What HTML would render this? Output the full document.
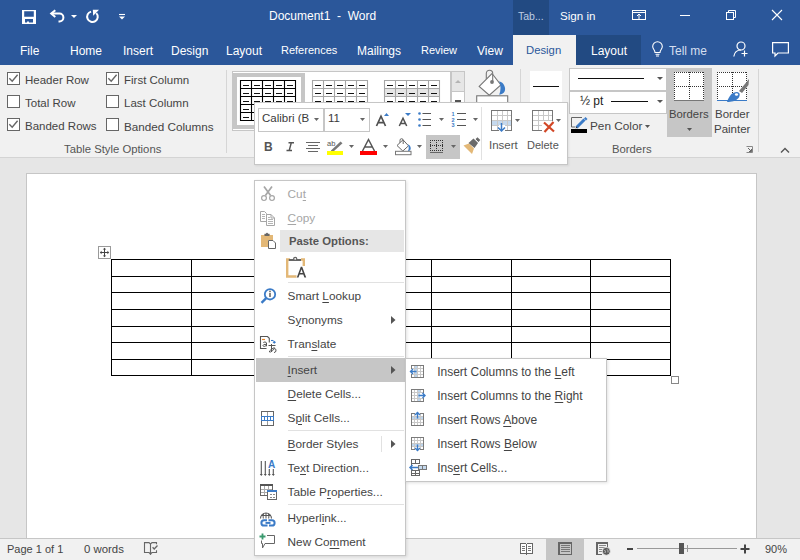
<!DOCTYPE html>
<html><head><meta charset="utf-8">
<style>
*{margin:0;padding:0;box-sizing:border-box}
html,body{width:800px;height:560px;overflow:hidden;background:#e6e6e6;font-family:"Liberation Sans",sans-serif;font-size:12px;color:#444;position:relative}
.a{position:absolute}
.t{position:absolute;white-space:nowrap;line-height:1}
svg{position:absolute;overflow:visible}
#title{left:0;top:0;width:800px;height:35px;background:#2b579a}
#tabs{left:0;top:35px;width:800px;height:30px;background:#2b579a}
#ribbon{left:0;top:65px;width:800px;height:93px;background:#f1f1f1;border-bottom:1px solid #d4d4d4}
#page{left:26px;top:173px;width:731px;height:380px;background:#fff;border:1px solid #c6c6c6}
#status{left:0;top:538px;width:800px;height:22px;background:#f1f1f1;border-top:1px solid #c6c6c6}
.w{color:#fff}
u{text-underline-offset:1.5px}
.cb{position:absolute;width:13px;height:13px;border:1px solid #666;background:#fff}
</style></head><body>
<!-- TITLE BAR -->
<div id="title" class="a"></div>
<div class="a" style="left:513px;top:0;width:36px;height:35px;background:#224a82"></div>
<!-- save -->
<svg style="left:22px;top:10px" width="14" height="14" viewBox="0 0 14 14"><path d="M0 0H14V14H0ZM2.2 1.3V6.7H11.8V1.3ZM3 9.1V12.4H5V11.4H7V12.4H11V9.1Z" fill="#fff" fill-rule="evenodd"/></svg>
<!-- undo -->
<svg style="left:49px;top:9px" width="17" height="15" viewBox="0 0 17 15"><path d="M6.3 1.2L2.2 4.6L6.3 8" fill="none" stroke="#fff" stroke-width="2"/><path d="M2.5 4.6H10.5A3.9 3.9 0 0 1 10.5 12.4H9.5" fill="none" stroke="#fff" stroke-width="2"/></svg>
<svg style="left:71px;top:15px" width="6" height="3" viewBox="0 0 6 3"><path d="M0 0H6L3 3Z" fill="#fff"/></svg>
<!-- redo -->
<svg style="left:85px;top:9px" width="16" height="16" viewBox="0 0 16 16"><path d="M6.1 2.6A5.3 5.3 0 1 0 11.3 4.1" fill="none" stroke="#fff" stroke-width="2"/><path d="M7.8 0.8H14L8.2 6.8Z" fill="#fff"/></svg>
<svg style="left:119px;top:14px" width="6" height="6" viewBox="0 0 6 6"><path d="M0 0.5H6" stroke="#fff" stroke-width="1.1"/><path d="M0 2.5H6L3 5.5Z" fill="#fff"/></svg>
<div class="t w" style="left:269px;top:10px;font-size:12px">Document1&nbsp; - &nbsp;Word</div>
<div class="t" style="left:518px;top:11px;font-size:10.5px;color:#bfcde3">Tab...</div>
<div class="t w" style="left:560px;top:10px;font-size:11.6px">Sign in</div>
<svg style="left:632px;top:10px" width="14" height="10" viewBox="0 0 14 10"><rect x="0.5" y="0.5" width="13" height="9" fill="none" stroke="#fff"/><path d="M0.5 2.5H13.5" stroke="#fff"/><path d="M7 9V4M5 6L7 4L9 6" fill="none" stroke="#fff" stroke-width="1"/></svg>
<div class="a" style="left:680px;top:15px;width:10px;height:1px;background:#fff"></div>
<svg style="left:726px;top:10px" width="10" height="10" viewBox="0 0 10 10"><rect x="0.5" y="2.5" width="7" height="7" fill="none" stroke="#fff"/><path d="M2.5 2.5V0.5H9.5V7.5H7.5" fill="none" stroke="#fff"/></svg>
<svg style="left:772px;top:10px" width="10" height="10" viewBox="0 0 10 10"><path d="M0 0L10 10M10 0L0 10" stroke="#fff" stroke-width="1.1"/></svg>

<!-- TABS -->
<div id="tabs" class="a"></div>
<div class="a" style="left:513px;top:35px;width:63px;height:30px;background:#f1f1f1"></div>
<div class="a" style="left:576px;top:35px;width:65px;height:30px;background:#224a82"></div>
<div class="t w" style="left:20px;top:45px">File</div>
<div class="t w" style="left:70px;top:45px">Home</div>
<div class="t w" style="left:123px;top:45px">Insert</div>
<div class="t w" style="left:171px;top:45px">Design</div>
<div class="t w" style="left:226px;top:45px">Layout</div>
<div class="t w" style="left:281px;top:45px;font-size:11px">References</div>
<div class="t w" style="left:357px;top:45px">Mailings</div>
<div class="t w" style="left:421px;top:45px;font-size:11px">Review</div>
<div class="t w" style="left:477px;top:45px">View</div>
<div class="t" style="left:526px;top:45px;color:#2b579a;font-size:11.3px">Design</div>
<div class="t w" style="left:591px;top:45px">Layout</div>
<svg style="left:652px;top:42px" width="11" height="15" viewBox="0 0 11 15"><path d="M3 10.5C3 8 0.7 7 0.7 4.6A4.8 4.8 0 0 1 10.3 4.6C10.3 7 8 8 8 10.5Z" fill="none" stroke="#fff" stroke-width="1.1"/><path d="M3.5 12.3H7.5M4 14H7" stroke="#fff" stroke-width="1"/></svg>
<div class="t" style="left:669px;top:45px;color:#d5dff0;font-size:12px">Tell me</div>
<svg style="left:733px;top:41px" width="16" height="16" viewBox="0 0 16 16"><circle cx="8" cy="5" r="4" fill="none" stroke="#fff" stroke-width="1.2"/><path d="M0.8 15.5C1.5 11 4 9 8 9" fill="none" stroke="#fff" stroke-width="1.2"/><path d="M11.5 9.5V15.5M8.5 12.5H14.5" stroke="#fff" stroke-width="1.2"/></svg>
<svg style="left:772px;top:42px" width="17" height="15" viewBox="0 0 17 15"><path d="M0.6 0.6H16.4V11H6L3 14V11H0.6Z" fill="none" stroke="#fff" stroke-width="1.2"/></svg>

<!-- RIBBON -->
<div id="ribbon" class="a"></div>
<div class="cb" style="left:7px;top:72px"></div>
<div class="cb" style="left:7px;top:95px"></div>
<div class="cb" style="left:7px;top:118px"></div>
<div class="cb" style="left:106px;top:72px"></div>
<div class="cb" style="left:106px;top:95px"></div>
<div class="cb" style="left:106px;top:118px"></div>
<svg style="left:7px;top:72px" width="13" height="13" viewBox="0 0 13 13"><path d="M2.3 6.3L5.2 9.3L10.6 2.8" fill="none" stroke="#666" stroke-width="1.4"/></svg>
<svg style="left:7px;top:118px" width="13" height="13" viewBox="0 0 13 13"><path d="M2.3 6.3L5.2 9.3L10.6 2.8" fill="none" stroke="#666" stroke-width="1.4"/></svg>
<svg style="left:106px;top:72px" width="13" height="13" viewBox="0 0 13 13"><path d="M2.3 6.3L5.2 9.3L10.6 2.8" fill="none" stroke="#666" stroke-width="1.4"/></svg>
<div class="t" style="left:25px;top:75px;font-size:11.5px">Header Row</div>
<div class="t" style="left:25px;top:98px;font-size:11.5px">Total Row</div>
<div class="t" style="left:25px;top:121px;font-size:11.5px">Banded Rows</div>
<div class="t" style="left:124px;top:75px;font-size:11.5px">First Column</div>
<div class="t" style="left:124px;top:98px;font-size:11.5px">Last Column</div>
<div class="t" style="left:124px;top:121px;font-size:11.7px">Banded Columns</div>
<div class="t" style="left:64px;top:144px;font-size:11.3px;color:#555">Table Style Options</div>
<div class="a" style="left:226px;top:70px;width:1px;height:83px;background:#d6d6d6"></div>
<!-- gallery -->
<div class="a" style="left:232px;top:71px;width:219px;height:60px;background:#fff;border:1px solid #c6c6c6"></div>
<div class="a" style="left:233px;top:73px;width:72px;height:56px;border:4px solid #c6c6c6"></div>
<svg style="left:240px;top:80px" width="57" height="42" viewBox="0 0 57 42"><path d="M0.5 0V41M11.5 0V41M22.5 0V41M33.5 0V41M44.5 0V41M55.5 0V41M0 0.5H56M0 8.5H56M0 16.5H56M0 24.5H56M0 32.5H56M0 40.5H56" stroke="#000" stroke-width="1.1"/><path d="M3 5.5h6M3 13.5h6M3 21.5h6M3 29.5h6M3 37.5h6M14 5.5h6M14 13.5h6M14 21.5h6M14 29.5h6M14 37.5h6M25 5.5h6M25 13.5h6M25 21.5h6M25 29.5h6M25 37.5h6M36 5.5h6M36 13.5h6M36 21.5h6M36 29.5h6M36 37.5h6M47 5.5h6M47 13.5h6M47 21.5h6M47 29.5h6M47 37.5h6" stroke="#111" stroke-width="1.2"/></svg>
<svg style="left:312px;top:80px" width="57" height="42" viewBox="0 0 57 42"><path d="M0.5 0V41M11.5 0V41M22.5 0V41M33.5 0V41M44.5 0V41M55.5 0V41M0 0.5H56M0 8.5H56M0 16.5H56M0 24.5H56M0 32.5H56M0 40.5H56" stroke="#a6a6a6" stroke-width="1.1"/><path d="M3 5.5h6M3 13.5h6M3 21.5h6M3 29.5h6M3 37.5h6M14 5.5h6M14 13.5h6M14 21.5h6M14 29.5h6M14 37.5h6M25 5.5h6M25 13.5h6M25 21.5h6M25 29.5h6M25 37.5h6M36 5.5h6M36 13.5h6M36 21.5h6M36 29.5h6M36 37.5h6M47 5.5h6M47 13.5h6M47 21.5h6M47 29.5h6M47 37.5h6" stroke="#111" stroke-width="1.2"/></svg>
<svg style="left:384px;top:80px" width="57" height="42" viewBox="0 0 57 42"><rect x="0" y="8" width="55" height="8" fill="#e6e6e6"/><rect x="0" y="24" width="55" height="8" fill="#e6e6e6"/><path d="M0.5 0V41M11.5 0V41M22.5 0V41M33.5 0V41M44.5 0V41M55.5 0V41M0 0.5H56M0 8.5H56M0 16.5H56M0 24.5H56M0 32.5H56M0 40.5H56" stroke="#a6a6a6" stroke-width="1.1"/><path d="M3 5.5h6M3 13.5h6M3 21.5h6M3 29.5h6M3 37.5h6M14 5.5h6M14 13.5h6M14 21.5h6M14 29.5h6M14 37.5h6M25 5.5h6M25 13.5h6M25 21.5h6M25 29.5h6M25 37.5h6M36 5.5h6M36 13.5h6M36 21.5h6M36 29.5h6M36 37.5h6M47 5.5h6M47 13.5h6M47 21.5h6M47 29.5h6M47 37.5h6" stroke="#111" stroke-width="1.2"/></svg>
<div class="a" style="left:451px;top:71px;width:14px;height:60px;background:#fff;border:1px solid #c6c6c6"></div>
<div class="a" style="left:451px;top:71px;width:14px;height:21px;background:#e6e6e6;border:1px solid #c6c6c6"></div>
<div class="a" style="left:455px;top:100px;width:6px;height:2px;background:#555"></div>
<svg style="left:455px;top:80px" width="6" height="3" viewBox="0 0 6 3"><path d="M0 3H6L3 0Z" fill="#b4b4b4"/></svg>
<!-- shading bucket -->
<svg style="left:470px;top:66px" width="50" height="40" viewBox="0 0 50 40"><path d="M16.3 13V7.5A3.2 3.2 0 0 1 22.7 7.5" fill="none" stroke="#777" stroke-width="1.1"/><path d="M9.2 20.4L22 7.5L30.9 19L19.3 29.2Z" fill="#fff" stroke="#777" stroke-width="1.1"/><path d="M22.7 7.5V16" stroke="#777" stroke-width="1.1"/><circle cx="22" cy="16" r="1.9" fill="#777"/><path d="M29.2 15.3C34 16.5 36 22 34.8 25C34 27 32 28.5 29.2 28.8C31 25 31 19 29.2 15.3Z" fill="#3b7bc7"/><rect x="6.7" y="29.8" width="31" height="12" fill="#fff" stroke="#777" stroke-width="1.1"/></svg>
<div class="a" style="left:520px;top:69px;width:1px;height:83px;background:#d6d6d6"></div>
<div class="a" style="left:530px;top:71px;width:32px;height:60px;background:#fff"></div>
<div class="a" style="left:533px;top:86px;width:26px;height:1px;background:#111"></div>
<!-- borders group -->
<div class="a" style="left:569px;top:68px;width:98px;height:23px;background:#fff;border:1px solid #c6c6c6"></div>
<div class="a" style="left:578px;top:78px;width:66px;height:1px;background:#111"></div>
<svg style="left:657px;top:77px" width="6" height="3" viewBox="0 0 6 3"><path d="M0 0H6L3 3Z" fill="#555"/></svg>
<div class="a" style="left:569px;top:91px;width:98px;height:23px;background:#fff;border:1px solid #c6c6c6"></div>
<div class="t" style="left:580px;top:95px;font-size:12px;color:#222">½ pt</div>
<div class="a" style="left:611px;top:101px;width:37px;height:1px;background:#111"></div>
<svg style="left:657px;top:100px" width="6" height="3" viewBox="0 0 6 3"><path d="M0 0H6L3 3Z" fill="#555"/></svg>
<svg style="left:570px;top:116px" width="19" height="18" viewBox="0 0 19 18"><path d="M12 1.5H1.5V11H5" fill="none" stroke="#666" stroke-width="1"/><path d="M6.5 11.5L14.5 3.5" stroke="#3b7bc7" stroke-width="3"/><path d="M14 2.5L15.5 1L17.5 3L16 4.5Z" fill="#3b7bc7"/><path d="M5.5 12.5L6.2 10.5L7.5 11.8Z" fill="#333"/><rect x="1" y="13" width="16" height="4" fill="#000"/></svg>
<div class="t" style="left:590px;top:121px;font-size:11.8px">Pen Color</div>
<svg style="left:645px;top:125px" width="5" height="3" viewBox="0 0 5 3"><path d="M0 0H5L2.5 3Z" fill="#555"/></svg>
<div class="a" style="left:667px;top:68px;width:45px;height:69px;background:#c6c6c6"></div>
<svg style="left:674px;top:72px" width="30" height="29" viewBox="0 0 30 29" shape-rendering="crispEdges"><rect x="0" y="0" width="30" height="29" fill="#fff"/><path d="M0 0h1v1h-1zM2 0h1v1h-1zM4 0h1v1h-1zM6 0h1v1h-1zM8 0h1v1h-1zM10 0h1v1h-1zM12 0h1v1h-1zM14 0h1v1h-1zM16 0h1v1h-1zM18 0h1v1h-1zM20 0h1v1h-1zM22 0h1v1h-1zM24 0h1v1h-1zM26 0h1v1h-1zM28 0h1v1h-1zM0 14h1v1h-1zM2 14h1v1h-1zM4 14h1v1h-1zM6 14h1v1h-1zM8 14h1v1h-1zM10 14h1v1h-1zM12 14h1v1h-1zM14 14h1v1h-1zM16 14h1v1h-1zM18 14h1v1h-1zM20 14h1v1h-1zM22 14h1v1h-1zM24 14h1v1h-1zM26 14h1v1h-1zM28 14h1v1h-1zM0 0h1v1h-1zM0 2h1v1h-1zM0 4h1v1h-1zM0 6h1v1h-1zM0 8h1v1h-1zM0 10h1v1h-1zM0 12h1v1h-1zM0 14h1v1h-1zM0 16h1v1h-1zM0 18h1v1h-1zM0 20h1v1h-1zM0 22h1v1h-1zM0 24h1v1h-1zM0 26h1v1h-1zM15 0h1v1h-1zM15 2h1v1h-1zM15 4h1v1h-1zM15 6h1v1h-1zM15 8h1v1h-1zM15 10h1v1h-1zM15 12h1v1h-1zM15 14h1v1h-1zM15 16h1v1h-1zM15 18h1v1h-1zM15 20h1v1h-1zM15 22h1v1h-1zM15 24h1v1h-1zM15 26h1v1h-1zM29 0h1v1h-1zM29 2h1v1h-1zM29 4h1v1h-1zM29 6h1v1h-1zM29 8h1v1h-1zM29 10h1v1h-1zM29 12h1v1h-1zM29 14h1v1h-1zM29 16h1v1h-1zM29 18h1v1h-1zM29 20h1v1h-1zM29 22h1v1h-1zM29 24h1v1h-1zM29 26h1v1h-1z" fill="#333"/><path d="M0 28h30v1h-30z" fill="#777"/></svg>
<div class="t" style="left:669px;top:109px;font-size:11.3px">Borders</div>
<svg style="left:687px;top:128px" width="5" height="3" viewBox="0 0 5 3"><path d="M0 0H5L2.5 3Z" fill="#555"/></svg>
<svg style="left:717px;top:72px" width="33" height="31" viewBox="0 0 33 31"><rect x="0" y="0" width="30" height="29" fill="#fff"/><path d="M0 0h1v1h-1zM2 0h1v1h-1zM4 0h1v1h-1zM6 0h1v1h-1zM8 0h1v1h-1zM10 0h1v1h-1zM12 0h1v1h-1zM14 0h1v1h-1zM16 0h1v1h-1zM18 0h1v1h-1zM20 0h1v1h-1zM22 0h1v1h-1zM24 0h1v1h-1zM26 0h1v1h-1zM28 0h1v1h-1zM0 14h1v1h-1zM2 14h1v1h-1zM4 14h1v1h-1zM6 14h1v1h-1zM8 14h1v1h-1zM10 14h1v1h-1zM12 14h1v1h-1zM14 14h1v1h-1zM16 14h1v1h-1zM18 14h1v1h-1zM20 14h1v1h-1zM22 14h1v1h-1zM24 14h1v1h-1zM26 14h1v1h-1zM28 14h1v1h-1zM0 0h1v1h-1zM0 2h1v1h-1zM0 4h1v1h-1zM0 6h1v1h-1zM0 8h1v1h-1zM0 10h1v1h-1zM0 12h1v1h-1zM0 14h1v1h-1zM0 16h1v1h-1zM0 18h1v1h-1zM0 20h1v1h-1zM0 22h1v1h-1zM0 24h1v1h-1zM0 26h1v1h-1zM15 0h1v1h-1zM15 2h1v1h-1zM15 4h1v1h-1zM15 6h1v1h-1zM15 8h1v1h-1zM15 10h1v1h-1zM15 12h1v1h-1zM15 14h1v1h-1zM15 16h1v1h-1zM15 18h1v1h-1zM15 20h1v1h-1zM15 22h1v1h-1zM15 24h1v1h-1zM15 26h1v1h-1zM29 0h1v1h-1zM29 2h1v1h-1zM29 4h1v1h-1zM29 6h1v1h-1zM29 8h1v1h-1zM29 10h1v1h-1zM29 12h1v1h-1zM29 14h1v1h-1zM29 16h1v1h-1zM29 18h1v1h-1zM29 20h1v1h-1zM29 22h1v1h-1zM29 24h1v1h-1zM29 26h1v1h-1z" fill="#333" shape-rendering="crispEdges"/><path d="M0 28h30v1h-30z" fill="#3b7bc7" shape-rendering="crispEdges"/><path d="M22 19L30 9.5L32 7L31.5 13L25 21Z" fill="#777"/><path d="M10 30C12 24 15 20 20 20C23 20.5 23.5 23 21.5 26C19 29 14 30 10 30Z" fill="#3b7bc7"/><ellipse cx="19.5" cy="22.5" rx="1.6" ry="1.2" fill="#fff"/></svg>
<div class="t" style="left:715px;top:109px;font-size:11.5px">Border</div>
<div class="t" style="left:714px;top:124px;font-size:11.5px">Painter</div>
<div class="t" style="left:612px;top:144px;font-size:11.3px;color:#555">Borders</div>
<svg style="left:746px;top:146px" width="7" height="7" viewBox="0 0 7 7"><path d="M0.5 0.5H6.5V6.5H0.5" fill="none" stroke="#888" stroke-width="1"/><path d="M2 2L5.5 5.5M5.5 3V5.5H3" fill="none" stroke="#666" stroke-width="1"/></svg>
<div class="a" style="left:758px;top:69px;width:1px;height:83px;background:#d6d6d6"></div>
<svg style="left:780px;top:147px" width="10" height="6" viewBox="0 0 10 6"><path d="M1 5.5L5 1.5L9 5.5" fill="none" stroke="#555" stroke-width="1.4"/></svg>

<!-- DOCUMENT -->
<div id="page" class="a"></div>
<svg style="left:111px;top:259px" width="561" height="117" viewBox="0 0 561 117" shape-rendering="crispEdges"><path d="M0 0H559V116H0ZM80 0V116M160 0V116M240 0V116M320 0V116M400 0V116M479 0V116M0 17H559M0 33H559M0 50H559M0 67H559M0 83H559M0 100H559" fill="none" stroke="#000" stroke-width="1.3" transform="translate(0.5 0.5)"/></svg>
<svg style="left:98px;top:246px" width="13" height="13" viewBox="0 0 13 13"><rect x="0.5" y="0.5" width="12" height="12" fill="#fff" stroke="#9a9a9a" shape-rendering="crispEdges"/><path d="M6.5 3V10M3 6.5H10" stroke="#444" stroke-width="1"/><path d="M6.5 1.8L4.8 3.6H8.2ZM6.5 11.2L4.8 9.4H8.2ZM1.8 6.5L3.6 4.8V8.2ZM11.2 6.5L9.4 4.8V8.2Z" fill="#444"/></svg>
<svg style="left:671px;top:376px" width="8" height="8" viewBox="0 0 8 8" shape-rendering="crispEdges"><rect x="0.5" y="0.5" width="7" height="7" fill="#fff" stroke="#888"/></svg>

<!-- STATUS -->
<div id="status" class="a"></div>
<div class="t" style="left:7px;top:544px;font-size:11px">Page 1 of 1</div>
<div class="t" style="left:84px;top:544px;font-size:11.4px">0 words</div>
<svg style="left:140px;top:540px" width="22" height="18" viewBox="0 0 22 18"><path d="M10.5 4L9 2.6H4.5V12.5H9L10.5 14L12 12.5H16.5V10.3M16.5 4.2V2.6H12L10.5 4M10.5 3.5V14.8" fill="none" stroke="#666" stroke-width="1.1"/><path d="M9.5 13.8L10.5 15L11.5 13.8Z" fill="#666"/><path d="M12.6 7.3L14.2 9L17.5 5.5" fill="none" stroke="#666" stroke-width="1.3"/></svg>
<svg style="left:520px;top:542px" width="14" height="14" viewBox="0 0 14 14" shape-rendering="crispEdges"><path d="M0.5 1.5H5.5L6.5 2.5L7.5 1.5H12.5V11.5H7.5L6.5 12.5L5.5 11.5H0.5Z" fill="#fff" stroke="#666"/><path d="M6 2v11h1v-11z" fill="#666"/><path d="M2 4h3v1h-3zM2 6h3v1h-3zM2 8h3v1h-3zM8 4h3v1h-3zM8 6h3v1h-3zM8 8h3v1h-3z" fill="#777"/></svg>
<div class="a" style="left:546px;top:539px;width:38px;height:21px;background:#c6c6c6"></div>
<svg style="left:558px;top:542px" width="14" height="13" viewBox="0 0 14 13" shape-rendering="crispEdges"><path d="M0 0h14v13h-14zM1.5 1.5v10h11v-10z" fill="#666" fill-rule="evenodd"/><path d="M2.5 3h9v1h-9zM2.5 5h9v1h-9zM2.5 7h9v1h-9zM2.5 9h9v1h-9z" fill="#777"/></svg>
<svg style="left:596px;top:542px" width="15" height="13" viewBox="0 0 15 13"><g shape-rendering="crispEdges"><path d="M0 0h12v6h-1.5v-4.5h-9v10h4.5v1.5h-6z" fill="#666"/><path d="M2.5 3h7v1h-7zM2.5 5h7v1h-7zM2.5 7h3v1h-3zM2.5 9h3v1h-3z" fill="#888"/></g><circle cx="10.3" cy="9.3" r="4" fill="#5a5a5a" stroke="#f1f1f1" stroke-width="0.8"/><path d="M8.5 8Q10 9 9 11M11 7.3Q12.5 8.5 12 10.5" fill="none" stroke="#ddd" stroke-width="0.8"/></svg>
<div class="a" style="left:627px;top:548px;width:6px;height:2px;background:#444"></div>
<div class="a" style="left:637px;top:548px;width:100px;height:1px;background:#999"></div>
<div class="a" style="left:687px;top:545px;width:1px;height:7px;background:#999"></div>
<div class="a" style="left:679px;top:543px;width:5px;height:11px;background:#555"></div>
<svg style="left:740px;top:544px" width="10" height="10" viewBox="0 0 10 10"><path d="M5 0.5V9.5M0.5 5H9.5" stroke="#444" stroke-width="2"/></svg>
<div class="t" style="left:765px;top:544px;font-size:11px">90%</div>

<!-- MINI TOOLBAR -->
<div class="a" style="left:254px;top:102px;width:314px;height:63px;background:#fff;border:1px solid #c6c6c6;box-shadow:1px 1px 2px rgba(0,0,0,0.08)"></div>
<div class="a" style="left:258px;top:108px;width:66px;height:24px;border:1px solid #c6c6c6"></div>
<div class="a" style="left:324px;top:108px;width:46px;height:24px;border:1px solid #c6c6c6"></div>
<div class="t" style="left:262px;top:113px;font-size:11.5px;color:#3a3a3a">Calibri (B</div>
<svg style="left:314px;top:118px" width="5" height="3" viewBox="0 0 5 3"><path d="M0 0H5L2.5 3Z" fill="#666"/></svg>
<div class="t" style="left:328px;top:113px;font-size:11.5px;color:#3a3a3a">11</div>
<svg style="left:360px;top:118px" width="5" height="3" viewBox="0 0 5 3"><path d="M0 0H5L2.5 3Z" fill="#666"/></svg>
<svg style="left:375px;top:115px" width="12" height="12" viewBox="0 0 12 12"><path d="M1.5 11L6 1.2L10.5 11M3.3 7.6H8.7" fill="none" stroke="#505050" stroke-width="1.7"/></svg>
<svg style="left:384px;top:113px" width="5" height="3" viewBox="0 0 5 3"><path d="M0 3H5L2.5 0Z" fill="#3b7bc7"/></svg>
<svg style="left:398px;top:117px" width="10" height="10" viewBox="0 0 10 10"><path d="M1.3 9L5 1.2L8.7 9M2.8 6.4H7.2" fill="none" stroke="#505050" stroke-width="1.5"/></svg>
<svg style="left:405px;top:113px" width="6" height="3" viewBox="0 0 6 3"><path d="M0 0H6L3 3Z" fill="#3b7bc7"/></svg>
<svg style="left:418px;top:112px" width="14" height="15" viewBox="0 0 14 15"><circle cx="1.5" cy="1.5" r="1.3" fill="#3b7bc7"/><circle cx="1.5" cy="7.5" r="1.3" fill="#3b7bc7"/><circle cx="1.5" cy="13.5" r="1.3" fill="#3b7bc7"/><path d="M4.5 1.5H13M4.5 7.5H13M4.5 13.5H13" stroke="#555" stroke-width="1.2"/></svg>
<svg style="left:439px;top:118px" width="5" height="3" viewBox="0 0 5 3"><path d="M0 0H5L2.5 3Z" fill="#666"/></svg>
<svg style="left:451px;top:111px" width="16" height="16" viewBox="0 0 16 16"><text x="0.5" y="5" font-size="5.5" font-weight="bold" fill="#3b7bc7" font-family="Liberation Sans">1</text><text x="0.5" y="11" font-size="5.5" font-weight="bold" fill="#3b7bc7" font-family="Liberation Sans">2</text><text x="0.5" y="16" font-size="5.5" font-weight="bold" fill="#3b7bc7" font-family="Liberation Sans">3</text><path d="M6 2.5H15M6 8.5H15M6 14.5H15" stroke="#555" stroke-width="1.2"/></svg>
<svg style="left:473px;top:118px" width="5" height="3" viewBox="0 0 5 3"><path d="M0 0H5L2.5 3Z" fill="#666"/></svg>
<div class="a" style="left:481px;top:107px;width:1px;height:53px;background:#e1e1e1"></div>
<svg style="left:491px;top:110px" width="22" height="22" viewBox="0 0 22 22" shape-rendering="crispEdges"><rect x="1" y="10" width="20" height="5" fill="#c5d9ee"/><path d="M6 1V20M11 1V20M16 1V20M1 5.5H21M1 10.5H21M1 15.5H21" stroke="#c8c8c8" stroke-width="1"/><rect x="0.5" y="0.5" width="20" height="20" fill="none" stroke="#777"/><rect x="8" y="15" width="6" height="7" fill="#fff"/></svg>
<svg style="left:496px;top:123px" width="12" height="10" viewBox="0 0 12 10"><path d="M5.5 0V8M2 4.5L5.5 8L9 4.5" fill="none" stroke="#3b7bc7" stroke-width="1.5"/></svg>
<svg style="left:515px;top:119px" width="5" height="3" viewBox="0 0 5 3"><path d="M0 0H5L2.5 3Z" fill="#666"/></svg>
<svg style="left:532px;top:110px" width="24" height="24" viewBox="0 0 24 24"><g shape-rendering="crispEdges"><path d="M6 1V20M11 1V20M16 1V20M1 5.5H21M1 10.5H21M1 15.5H21" stroke="#c8c8c8" stroke-width="1"/><rect x="0.5" y="0.5" width="20" height="20" fill="none" stroke="#777"/><rect x="10" y="11" width="14" height="13" fill="#fff"/></g><path d="M12 12.5L22 21.5M21.5 12L12.5 22" stroke="#d24726" stroke-width="2.2"/></svg>
<svg style="left:556px;top:119px" width="5" height="3" viewBox="0 0 5 3"><path d="M0 0H5L2.5 3Z" fill="#666"/></svg>
<div class="t" style="left:489px;top:140px;font-size:11.5px;color:#555">Insert</div>
<div class="t" style="left:527px;top:140px;font-size:11px;color:#555">Delete</div>
<div class="t" style="left:264px;top:140.5px;font-size:12px;font-weight:bold;color:#555">B</div>
<svg style="left:284px;top:140px" width="12" height="12" viewBox="0 0 12 12"><path d="M4.5 2.8H10M2.5 10.5H8M7.3 2.8L5.2 10.5" fill="none" stroke="#555" stroke-width="1.4"/></svg>
<svg style="left:306px;top:141px" width="14" height="12" viewBox="0 0 14 12"><path d="M0 1.5H14M2 4.5H12M0 7.5H14M2 10.5H12" stroke="#666" stroke-width="1"/></svg>
<svg style="left:327px;top:140px" width="17" height="15" viewBox="0 0 17 15"><text x="0" y="5.5" font-size="7.5" fill="#555" font-family="Liberation Sans">ab</text><path d="M4 10.5L13.5 1.5L15.5 3.2L6.5 11.5L4 11.8Z" fill="#777"/><rect x="0" y="11" width="16" height="4" fill="#ffff00"/></svg>
<svg style="left:349px;top:145px" width="5" height="3" viewBox="0 0 5 3"><path d="M0 0H5L2.5 3Z" fill="#666"/></svg>
<svg style="left:360px;top:138px" width="17" height="14" viewBox="0 0 17 14"><path d="M2.5 13L8.5 1.5L14.5 13M5 9H12" fill="none" stroke="#555" stroke-width="1.5"/></svg>
<div class="a" style="left:360px;top:151px;width:17px;height:4px;background:#ff0000"></div>
<svg style="left:383px;top:145px" width="5" height="3" viewBox="0 0 5 3"><path d="M0 0H5L2.5 3Z" fill="#666"/></svg>
<svg style="left:395px;top:138px" width="17" height="17" viewBox="0 0 17 17"><path d="M5 5V2.3A1.6 1.6 0 0 1 8.2 2.3" fill="none" stroke="#666" stroke-width="1"/><path d="M2 7.5L8 1.8L13.5 7.8L7.8 13Z" fill="#fff" stroke="#666" stroke-width="1"/><path d="M8.2 2.3V6" stroke="#666" stroke-width="1"/><path d="M12.8 6.5C15.5 7 16.2 10 15.5 11.5C15 12.5 14 13 13 13C14 11 14 8.5 12.8 6.5Z" fill="#3b7bc7"/><rect x="0.5" y="13.3" width="15.5" height="3.4" fill="#fff" stroke="#777" stroke-width="1"/></svg>
<svg style="left:417px;top:145px" width="5" height="3" viewBox="0 0 5 3"><path d="M0 0H5L2.5 3Z" fill="#666"/></svg>
<div class="a" style="left:426px;top:135px;width:34px;height:24px;background:#c6c6c6"></div>
<svg style="left:430px;top:140px" width="14" height="13" viewBox="0 0 14 13"><path d="M0 0h1v1h-1zM2 0h1v1h-1zM4 0h1v1h-1zM6 0h1v1h-1zM8 0h1v1h-1zM10 0h1v1h-1zM12 0h1v1h-1zM0 5h1v1h-1zM2 5h1v1h-1zM4 5h1v1h-1zM6 5h1v1h-1zM8 5h1v1h-1zM10 5h1v1h-1zM12 5h1v1h-1zM0 10h1v1h-1zM2 10h1v1h-1zM4 10h1v1h-1zM6 10h1v1h-1zM8 10h1v1h-1zM10 10h1v1h-1zM12 10h1v1h-1zM0 0h1v1h-1zM0 2h1v1h-1zM0 4h1v1h-1zM0 6h1v1h-1zM0 8h1v1h-1zM0 10h1v1h-1zM6 0h1v1h-1zM6 2h1v1h-1zM6 4h1v1h-1zM6 6h1v1h-1zM6 8h1v1h-1zM6 10h1v1h-1zM12 0h1v1h-1zM12 2h1v1h-1zM12 4h1v1h-1zM12 6h1v1h-1zM12 8h1v1h-1zM12 10h1v1h-1z" fill="#333" shape-rendering="crispEdges"/><path d="M0 12h13v1h-13z" fill="#666" shape-rendering="crispEdges"/></svg>
<svg style="left:451px;top:145px" width="5" height="3" viewBox="0 0 5 3"><path d="M0 0H5L2.5 3Z" fill="#666"/></svg>
<svg style="left:462px;top:137px" width="19" height="18" viewBox="0 0 19 18"><path d="M1.5 8.5L7 6.5L12 11.5L10 17Z" fill="#e3b877"/><path d="M6.5 6L11.5 1.5L16 6L12.5 11Z" fill="#6a6a6a"/><path d="M13 2.5L15.5 0.3L18.3 3L16 5.5Z" fill="#6a6a6a"/><path d="M12 1L17 6" stroke="#fff" stroke-width="0.9"/></svg>

<!-- CONTEXT MENU -->
<div class="a" style="left:254px;top:180px;width:152px;height:376px;background:#fff;border:1px solid #c6c6c6;box-shadow:1px 1px 3px rgba(0,0,0,0.12)"></div>
<svg style="left:259px;top:185px" width="18" height="17" viewBox="0 0 18 17"><path d="M5 1.5L11.6 10.6M13 1.5L6.4 10.6" stroke="#a6a6a6" stroke-width="1.7"/><circle cx="5" cy="13.1" r="2.4" fill="#fff" stroke="#a6a6a6" stroke-width="1.2"/><circle cx="13" cy="13.1" r="2.4" fill="#fff" stroke="#a6a6a6" stroke-width="1.2"/></svg>
<div class="t" style="left:287.6px;top:189.11px;font-size:11.8px;color:#a6a6a6;">Cu<u>t</u></div>
<svg style="left:259px;top:210px" width="17" height="16" viewBox="0 0 17 16"><path d="M1.5 1.5H5.5L7.5 3.5V11.5H1.5Z" fill="#fff" stroke="#a6a6a6" stroke-width="1"/><path d="M7.5 4.5H12L15.5 8V15.5H7.5Z" fill="#fff" stroke="#a6a6a6" stroke-width="1"/><path d="M12 4.5V8H15.5" fill="none" stroke="#a6a6a6" stroke-width="1"/><g shape-rendering="crispEdges" fill="#b4b4b4"><rect x="3" y="4" width="3" height="1"/><rect x="3" y="6" width="3" height="1"/><rect x="3" y="8" width="3" height="1"/><rect x="9" y="7" width="2" height="1"/><rect x="9" y="9" width="5" height="1"/><rect x="9" y="11" width="5" height="1"/><rect x="9" y="13" width="5" height="1"/></g></svg>
<div class="t" style="left:287.6px;top:213.11px;font-size:11.8px;color:#a6a6a6;"><u>C</u>opy</div>
<div class="a" style="left:280px;top:230px;width:124px;height:22px;background:#e6e6e6"></div>
<svg style="left:260px;top:232px" width="18" height="18" viewBox="0 0 18 18"><path d="M1 3H4.5V2H9.5V3H13V8H8V15H1Z" fill="#e3b877"/><path d="M4.5 4V1.8H6A1 1 0 0 1 8 1.8H9.5V4Z" fill="#666"/><path d="M8.5 8.5H13L15.5 11V16.5H8.5Z" fill="#fff" stroke="#666" stroke-width="1"/></svg>
<div class="t" style="left:289px;top:235.5px;font-size:11.3px;font-weight:bold;color:#555">Paste Options:</div>
<svg style="left:285px;top:255px" width="23" height="24" viewBox="0 0 23 24"><path d="M5 4.5H2.2V21.5H11.5M16 4.5H18.8V11" fill="none" stroke="#e3b877" stroke-width="2.4"/><path d="M3.8 6V4H8A2.2 2.2 0 0 1 12.4 4H16V6Z" fill="#666"/><circle cx="10.2" cy="3.8" r="0.9" fill="#fff"/><path d="M11.8 22.6L15.8 11.8H17.2L21.2 22.6H19.4L18.3 19.5H14.6L13.5 22.6ZM15.1 18H17.8L16.5 14.2Z" fill="#444"/></svg>
<div class="a" style="left:288px;top:282px;width:116px;height:1px;background:#e1e1e1"></div>
<svg style="left:260px;top:288px" width="17" height="17" viewBox="0 0 17 17"><circle cx="10" cy="6.3" r="5.2" fill="#fff" stroke="#3b7bc7" stroke-width="1.8"/><path d="M6.2 10.2L1.5 14.8" stroke="#3b7bc7" stroke-width="2.4"/><path d="M10 5V9" stroke="#666" stroke-width="1.6"/><circle cx="10" cy="3.4" r="0.9" fill="#666"/></svg>
<div class="t" style="left:287.6px;top:290.61px;font-size:11.8px;color:#444;">Smart <u>L</u>ookup</div>
<div class="t" style="left:287.6px;top:314.61px;font-size:11.8px;color:#444;">S<u>y</u>nonyms</div>
<svg style="left:391px;top:316px" width="5" height="8" viewBox="0 0 5 8"><path d="M0 0V8L4.5 4Z" fill="#555"/></svg>
<svg style="left:257px;top:334px" width="22" height="20" viewBox="0 0 22 20"><path d="M9.5 14.5H3.5V2.5H10.5L12.3 4.3V8.5" fill="none" stroke="#555" stroke-width="1.1"/><path d="M5 5.5H8" stroke="#e8862a" stroke-width="1.2"/><path d="M9.5 9.5Q9.5 8 8 8Q6.5 8 6.2 8.8M9.5 9V12.3M9.5 10.4Q6 10 6 11.5Q6 12.5 7.5 12.4Q9 12.2 9.5 11" fill="none" stroke="#555" stroke-width="1"/><path d="M14 6.5H16.5" stroke="#3b7bc7" stroke-width="1.1"/><path d="M17.3 6.8L19 8.3L17.3 9.8L15.6 8.3Z" fill="#3b7bc7"/><path d="M11.5 11.5H18.5M14.5 10V18M17.5 13.5Q14 15 12.5 17Q12 18.5 13.5 18Q16 17 17 14.5Q19.5 14.5 19 17Q18.5 18.5 17 18.5" fill="none" stroke="#555" stroke-width="1"/></svg>
<div class="t" style="left:287.6px;top:338.61px;font-size:11.8px;color:#444;">Tran<u>s</u>late</div>
<div class="a" style="left:288px;top:356px;width:116px;height:1px;background:#e1e1e1"></div>
<div class="a" style="left:256px;top:358px;width:149px;height:24px;background:#c6c6c6"></div>
<div class="t" style="left:287.6px;top:364.61px;font-size:11.8px;color:#444;"><u>I</u>nsert</div>
<svg style="left:391px;top:366px" width="5" height="8" viewBox="0 0 5 8"><path d="M0 0V8L4.5 4Z" fill="#555"/></svg>
<div class="t" style="left:287.6px;top:388.61px;font-size:11.8px;color:#444;"><u>D</u>elete Cells...</div>
<svg style="left:261px;top:411px" width="14" height="15" viewBox="0 0 14 15" shape-rendering="crispEdges"><rect x="0.5" y="0.5" width="12" height="14" fill="#fff" stroke="#666"/><path d="M6.5 1V14" stroke="#999"/><rect x="0.5" y="5" width="12" height="4.4" fill="#fff" stroke="#3b7bc7"/><path d="M3.5 5V9.5M6.5 5V9.5M9.5 5V9.5" stroke="#3b7bc7"/></svg>
<div class="t" style="left:287.6px;top:412.61px;font-size:11.8px;color:#444;">S<u>p</u>lit Cells...</div>
<div class="a" style="left:288px;top:430px;width:116px;height:1px;background:#e1e1e1"></div>
<div class="t" style="left:287.6px;top:438.61px;font-size:11.8px;color:#444;"><u>B</u>order Styles</div>
<div class="a" style="left:381px;top:436px;width:1px;height:16px;background:#e1e1e1"></div>
<svg style="left:391px;top:440px" width="5" height="8" viewBox="0 0 5 8"><path d="M0 0V8L4.5 4Z" fill="#555"/></svg>
<svg style="left:259px;top:459px" width="18" height="18" viewBox="0 0 18 18"><path d="M2.3 2V16M6.3 2V16M10.3 10V16M14.3 10V16" stroke="#555" stroke-width="1.1"/><path d="M0.8 15L2.3 17L3.8 15ZM4.8 15L6.3 17L7.8 15ZM8.8 15L10.3 17L11.8 15ZM12.8 15L14.3 17L15.8 15Z" fill="#555"/><text x="9" y="8.5" font-size="10" font-weight="bold" fill="#3b7bc7" font-family="Liberation Sans">A</text></svg>
<div class="t" style="left:287.6px;top:462.61px;font-size:11.8px;color:#444;">Te<u>x</u>t Direction...</div>
<svg style="left:260px;top:483px" width="17" height="17" viewBox="0 0 17 17" shape-rendering="crispEdges"><rect x="0.5" y="1" width="12" height="11.5" fill="#fff" stroke="#666"/><rect x="0" y="0.5" width="13" height="2.5" fill="#555"/><path d="M4.5 3V12M8.5 3V7M1 6H12M1 9H7" stroke="#aaa"/><rect x="7.5" y="7" width="9" height="9.5" fill="#fff" stroke="#666"/><rect x="7" y="6.5" width="10" height="2" fill="#3b7bc7"/><path d="M9.5 10.5h2v1.5h-2zM9.5 13.5h2v1.5h-2z" fill="#888"/><path d="M12.5 11h2.5M12.5 14h2.5" stroke="#888"/></svg>
<div class="t" style="left:287.6px;top:486.61px;font-size:11.8px;color:#444;">Table P<u>r</u>operties...</div>
<div class="a" style="left:288px;top:504px;width:116px;height:1px;background:#e1e1e1"></div>
<svg style="left:259px;top:509px" width="18" height="18" viewBox="0 0 18 18"><path d="M1.5 9.5A5.5 5.5 0 0 1 12.5 9.5" fill="none" stroke="#555" stroke-width="1.1"/><path d="M7 4V9.5M2.5 6.5H11.5M4.5 4.8Q3.8 7 4.3 9.5M9.5 4.8Q10.2 7 9.7 9.5" fill="none" stroke="#555" stroke-width="1"/><path d="M8 11.3H5A2.6 2.6 0 0 0 5 16.5H8.5" fill="none" stroke="#3b7bc7" stroke-width="2"/><path d="M9.5 11.3H13A2.6 2.6 0 0 1 13 16.5H10" fill="none" stroke="#3b7bc7" stroke-width="2"/><path d="M6.5 13.9H11.5" stroke="#3b7bc7" stroke-width="2"/></svg>
<div class="t" style="left:287.6px;top:512.61px;font-size:11.8px;color:#444;">Hyperl<u>i</u>nk...</div>
<svg style="left:259px;top:533px" width="17" height="17" viewBox="0 0 17 17"><path d="M3.5 0.5V6.5M0.5 3.5H6.5" stroke="#3a9a6e" stroke-width="1.8"/><path d="M8 2.5H15.5V10.5H6L3.5 15V10.5H2.5V7.5" fill="none" stroke="#666" stroke-width="1"/></svg>
<div class="t" style="left:287.6px;top:536.61px;font-size:11.8px;color:#444;">New Co<u>m</u>ment</div>

<!-- SUBMENU -->
<div class="a" style="left:405px;top:358px;width:202px;height:124px;background:#fff;border:1px solid #c6c6c6;box-shadow:1px 1px 3px rgba(0,0,0,0.12)"></div>
<svg style="left:409px;top:364px" width="17" height="15" viewBox="0 0 17 15"><g shape-rendering="crispEdges"><rect x="2" y="1" width="13" height="13" fill="#c8c8c8"/><rect x="3" y="2" width="2" height="2" fill="#fff"/><rect x="3" y="5" width="2" height="2" fill="#fff"/><rect x="3" y="8" width="2" height="2" fill="#fff"/><rect x="3" y="11" width="2" height="2" fill="#fff"/><rect x="6" y="2" width="2" height="2" fill="#bcd5ee"/><rect x="6" y="5" width="2" height="2" fill="#bcd5ee"/><rect x="6" y="8" width="2" height="2" fill="#bcd5ee"/><rect x="6" y="11" width="2" height="2" fill="#bcd5ee"/><rect x="9" y="2" width="2" height="2" fill="#fff"/><rect x="9" y="5" width="2" height="2" fill="#fff"/><rect x="9" y="8" width="2" height="2" fill="#fff"/><rect x="9" y="11" width="2" height="2" fill="#fff"/><rect x="12" y="2" width="2" height="2" fill="#fff"/><rect x="12" y="5" width="2" height="2" fill="#fff"/><rect x="12" y="8" width="2" height="2" fill="#fff"/><rect x="12" y="11" width="2" height="2" fill="#fff"/><path d="M2 1h13v13h-13z M3 2v11h11v-11z" fill="#7a7a7a" fill-rule="evenodd"/><rect x="0" y="5" width="5" height="5" fill="#fff"/></g><path d="M1.5 7.5H7.5M4 5L1.5 7.5L4 10" fill="none" stroke="#3b7bc7" stroke-width="1.4"/></svg>
<div class="t" style="left:437.2px;top:366.14px;font-size:12.0px;color:#444;">Insert Columns to the <u>L</u>eft</div>
<svg style="left:409px;top:388px" width="17" height="15" viewBox="0 0 17 15"><g shape-rendering="crispEdges"><rect x="2" y="1" width="13" height="13" fill="#c8c8c8"/><rect x="3" y="2" width="2" height="2" fill="#fff"/><rect x="3" y="5" width="2" height="2" fill="#fff"/><rect x="3" y="8" width="2" height="2" fill="#fff"/><rect x="3" y="11" width="2" height="2" fill="#fff"/><rect x="6" y="2" width="2" height="2" fill="#fff"/><rect x="6" y="5" width="2" height="2" fill="#fff"/><rect x="6" y="8" width="2" height="2" fill="#fff"/><rect x="6" y="11" width="2" height="2" fill="#fff"/><rect x="9" y="2" width="2" height="2" fill="#bcd5ee"/><rect x="9" y="5" width="2" height="2" fill="#bcd5ee"/><rect x="9" y="8" width="2" height="2" fill="#bcd5ee"/><rect x="9" y="11" width="2" height="2" fill="#bcd5ee"/><rect x="12" y="2" width="2" height="2" fill="#fff"/><rect x="12" y="5" width="2" height="2" fill="#fff"/><rect x="12" y="8" width="2" height="2" fill="#fff"/><rect x="12" y="11" width="2" height="2" fill="#fff"/><path d="M2 1h13v13h-13z M3 2v11h11v-11z" fill="#7a7a7a" fill-rule="evenodd"/><rect x="11" y="5" width="6" height="5" fill="#fff"/></g><path d="M9.5 7.5H16M13.5 5L16 7.5L13.5 10" fill="none" stroke="#3b7bc7" stroke-width="1.4"/></svg>
<div class="t" style="left:437.2px;top:390.14px;font-size:12.0px;color:#444;">Insert Columns to the <u>R</u>ight</div>
<svg style="left:409px;top:412px" width="17" height="15" viewBox="0 0 17 15"><g shape-rendering="crispEdges"><rect x="2" y="1" width="13" height="13" fill="#c8c8c8"/><rect x="3" y="2" width="2" height="2" fill="#fff"/><rect x="3" y="5" width="2" height="2" fill="#bcd5ee"/><rect x="3" y="8" width="2" height="2" fill="#fff"/><rect x="3" y="11" width="2" height="2" fill="#fff"/><rect x="6" y="2" width="2" height="2" fill="#fff"/><rect x="6" y="5" width="2" height="2" fill="#bcd5ee"/><rect x="6" y="8" width="2" height="2" fill="#fff"/><rect x="6" y="11" width="2" height="2" fill="#fff"/><rect x="9" y="2" width="2" height="2" fill="#fff"/><rect x="9" y="5" width="2" height="2" fill="#bcd5ee"/><rect x="9" y="8" width="2" height="2" fill="#fff"/><rect x="9" y="11" width="2" height="2" fill="#fff"/><rect x="12" y="2" width="2" height="2" fill="#fff"/><rect x="12" y="5" width="2" height="2" fill="#bcd5ee"/><rect x="12" y="8" width="2" height="2" fill="#fff"/><rect x="12" y="11" width="2" height="2" fill="#fff"/><path d="M2 1h13v13h-13z M3 2v11h11v-11z" fill="#7a7a7a" fill-rule="evenodd"/><rect x="6" y="0" width="5" height="4" fill="#fff"/></g><path d="M8.5 0.5V6.5M6 3L8.5 0.5L11 3" fill="none" stroke="#3b7bc7" stroke-width="1.4"/></svg>
<div class="t" style="left:437.2px;top:414.14px;font-size:12.0px;color:#444;">Insert Rows <u>A</u>bove</div>
<svg style="left:409px;top:436px" width="17" height="15" viewBox="0 0 17 15"><g shape-rendering="crispEdges"><rect x="2" y="1" width="13" height="13" fill="#c8c8c8"/><rect x="3" y="2" width="2" height="2" fill="#fff"/><rect x="3" y="5" width="2" height="2" fill="#fff"/><rect x="3" y="8" width="2" height="2" fill="#bcd5ee"/><rect x="3" y="11" width="2" height="2" fill="#fff"/><rect x="6" y="2" width="2" height="2" fill="#fff"/><rect x="6" y="5" width="2" height="2" fill="#fff"/><rect x="6" y="8" width="2" height="2" fill="#bcd5ee"/><rect x="6" y="11" width="2" height="2" fill="#fff"/><rect x="9" y="2" width="2" height="2" fill="#fff"/><rect x="9" y="5" width="2" height="2" fill="#fff"/><rect x="9" y="8" width="2" height="2" fill="#bcd5ee"/><rect x="9" y="11" width="2" height="2" fill="#fff"/><rect x="12" y="2" width="2" height="2" fill="#fff"/><rect x="12" y="5" width="2" height="2" fill="#fff"/><rect x="12" y="8" width="2" height="2" fill="#bcd5ee"/><rect x="12" y="11" width="2" height="2" fill="#fff"/><path d="M2 1h13v13h-13z M3 2v11h11v-11z" fill="#7a7a7a" fill-rule="evenodd"/><rect x="6" y="11" width="5" height="4" fill="#fff"/></g><path d="M8.5 8.5V14.5M6 12L8.5 14.5L11 12" fill="none" stroke="#3b7bc7" stroke-width="1.4"/></svg>
<div class="t" style="left:437.2px;top:438.14px;font-size:12.0px;color:#444;">Insert Rows <u>B</u>elow</div>
<svg style="left:409px;top:459px" width="18" height="17" viewBox="0 0 18 17" ><g shape-rendering="crispEdges" fill="none" stroke="#666"><rect x="2.5" y="0.5" width="8" height="4"/><path d="M6.5 0.5V4.5"/><rect x="2.5" y="11.5" width="8" height="5"/><path d="M6.5 11.5V16.5M2.5 14H10.5"/><rect x="9.5" y="6.5" width="8" height="4" fill="#c5d9ee" stroke="#777"/><path d="M13.5 6.5V10.5" stroke="#777"/><path d="M2.5 4.5V11.5"/></g><path d="M1 8.5H9M3.5 6L1 8.5L3.5 11" fill="none" stroke="#3b7bc7" stroke-width="1.5"/></svg>
<div class="t" style="left:437.2px;top:462.14px;font-size:12.0px;color:#444;">Ins<u>e</u>rt Cells...</div>
</body></html>
